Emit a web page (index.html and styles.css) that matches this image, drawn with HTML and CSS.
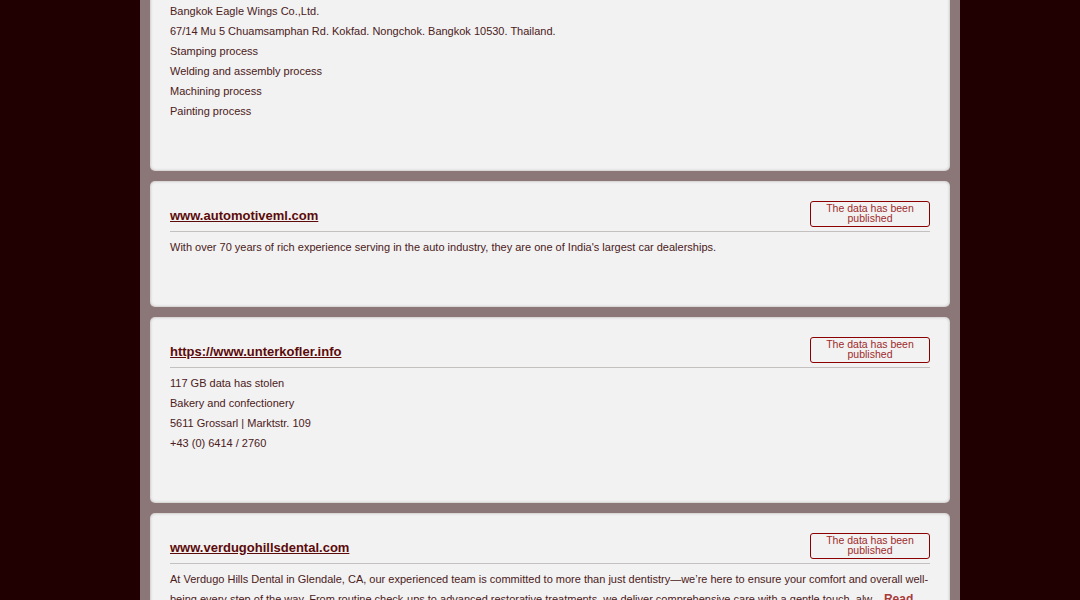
FILE: index.html
```html
<!DOCTYPE html>
<html>
<head>
<meta charset="utf-8">
<link rel="stylesheet" href="styles.css">
</head>
<body>
<div class="page">
  <div class="column">
    <div class="card">
      <div class="card-head">
        <a class="site" href="#">www.eaglewings.co.th</a>
        <div class="badge">The data has been<br>published</div>
      </div>
      <div class="rule"></div>
      <div class="body">
        <p>Bangkok Eagle Wings Co.,Ltd.</p>
        <p>67/14 Mu 5 Chuamsamphan Rd. Kokfad. Nongchok. Bangkok 10530. Thailand.</p>
        <p>Stamping process</p>
        <p>Welding and assembly process</p>
        <p>Machining process</p>
        <p>Painting process</p>
      </div>
    </div>
    <div class="card">
      <div class="card-head">
        <a class="site" href="#">www.automotiveml.com</a>
        <div class="badge">The data has been<br>published</div>
      </div>
      <div class="rule"></div>
      <div class="body">
        <p>With over 70 years of rich experience serving in the auto industry, they are one of India's largest car dealerships.</p>
      </div>
    </div>
    <div class="card">
      <div class="card-head">
        <a class="site" href="#">https://www.unterkofler.info</a>
        <div class="badge">The data has been<br>published</div>
      </div>
      <div class="rule"></div>
      <div class="body">
        <p>117 GB data has stolen</p>
        <p>Bakery and confectionery</p>
        <p>5611 Grossarl | Marktstr. 109</p>
        <p>+43 (0) 6414 / 2760</p>
      </div>
    </div>
    <div class="card">
      <div class="card-head">
        <a class="site" href="#">www.verdugohillsdental.com</a>
        <div class="badge">The data has been<br>published</div>
      </div>
      <div class="rule"></div>
      <div class="body">
        <p>At Verdugo Hills Dental in Glendale, CA, our experienced team is committed to more than just dentistry—we’re here to ensure your comfort and overall well-being every step of the way. From routine check-ups to advanced restorative treatments, we deliver comprehensive care with a gentle touch, alw... <a class="more" href="#">Read more</a></p>
      </div>
    </div>
  </div>
</div>
</body>
</html>
```
FILE: styles.css
```css
html, body {
  margin: 0;
  padding: 0;
  background: #200000;
  font-family: "Liberation Sans", Arial, sans-serif;
  height: 100%;
  overflow: hidden;
}
.page {
  display: flex;
  justify-content: center;
  padding-left: 20px;
}
.column {
  width: 800px;
  background: #8b7777;
  padding: 10px 10px 10px;
  margin-top: -65px;
  display: flex;
  flex-direction: column;
  gap: 10px;
}
.card {
  background: #f2f2f2;
  border-radius: 5px;
  box-shadow: inset 0 0 3px rgba(60, 40, 40, 0.35);
  padding: 20px 20px 50px;
}
.card-head {
  display: flex;
  justify-content: space-between;
  align-items: center;
  height: 26px;
}
.site {
  font-size: 13px;
  font-weight: bold;
  color: #5c0a0a;
  text-decoration: underline;
  padding-top: 2px;
}
.badge {
  box-sizing: border-box;
  width: 120px;
  height: 26px;
  border: 1px solid #8b0000;
  border-radius: 3px;
  padding-top: 1px;
  font-size: 10.5px;
  line-height: 10px;
  color: #a02a2a;
  text-align: center;
}
.rule {
  height: 1px;
  background: #c4c0c0;
  margin-top: 4px;
}
.body {
  margin-top: 5px;
}
.body p {
  margin: 0;
  font-size: 11px;
  line-height: 20px;
  color: #4b2020;
}
.more {
  font-size: 12px;
  font-weight: bold;
  color: #a83a3a;
  text-decoration: none;
}
```
